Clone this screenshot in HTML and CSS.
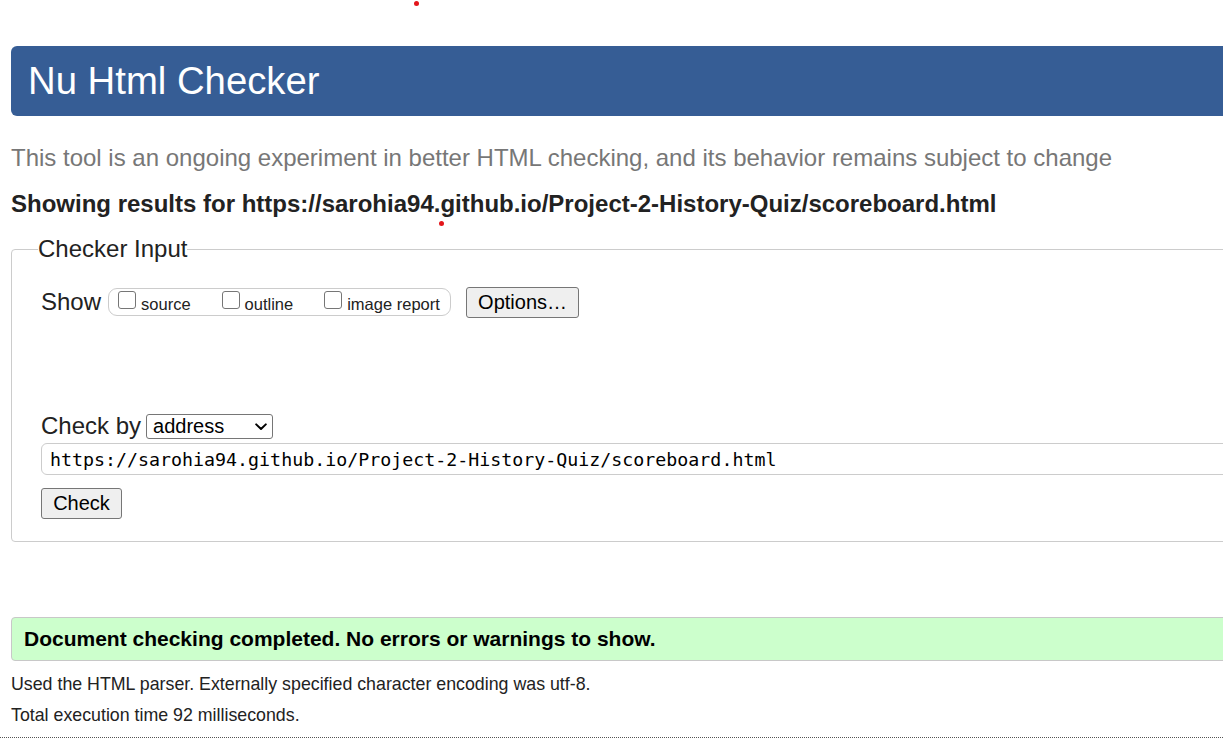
FILE: index.html
```html
<!DOCTYPE html>
<html lang="en">
<head>
<meta charset="utf-8">
<title>Showing results for https://sarohia94.github.io/Project-2-History-Quiz/scoreboard.html - Nu Html Checker</title>
<link rel="stylesheet" href="styles.css">
</head>
<body>
<div class="page">
  <h1 class="masthead">Nu Html Checker</h1>
  <p class="intro">This tool is an ongoing experiment in better HTML checking, and its behavior remains subject to change</p>
  <p class="result-for">Showing results for https://sarohia94.github.io/Project-2-History-Quiz/scoreboard.html</p>
  <form class="checker-form">
    <fieldset class="checker">
      <legend class="checker-legend">Checker Input</legend>
      <div class="show-row">
        <span class="row-label">Show</span>
        <span class="show-group">
          <label class="opt"><input type="checkbox" class="cb"><span>source</span></label>
          <label class="opt"><input type="checkbox" class="cb"><span>outline</span></label>
          <label class="opt"><input type="checkbox" class="cb"><span>image report</span></label>
        </span>
        <button type="button" class="btn btn-options">Options…</button>
      </div>
      <div class="checkby-row">
        <span class="row-label">Check by</span>
        <span class="select-wrap">
          <select class="select">
            <option>address</option>
            <option>file upload</option>
            <option>text input</option>
          </select>
          <svg class="chevron" width="12" height="8" viewBox="0 0 12 8" aria-hidden="true"><path d="M1.2 1.4 L6 6 L10.8 1.4" fill="none" stroke="#000" stroke-width="2" stroke-linecap="round" stroke-linejoin="round"/></svg>
        </span>
      </div>
      <input class="url" type="url" value="https://sarohia94.github.io/Project-2-History-Quiz/scoreboard.html">
      <button type="button" class="btn btn-check">Check</button>
    </fieldset>
  </form>
  <p class="success">Document checking completed. No errors or warnings to show.</p>
  <p class="details">Used the HTML parser. Externally specified character encoding was utf-8.</p>
  <p class="details details-time">Total execution time 92 milliseconds.</p>
  <hr class="rule">
</div>
<span class="dot dot-a"></span>
<span class="dot dot-b"></span>
</body>
</html>
```
FILE: styles.css
```css
html {
  overflow: hidden;
}
body {
  margin: 0;
  font-family: "Liberation Sans", Arial, sans-serif;
  color: #222;
  background: #fff;
}
.page {
  width: 1500px;
  padding-left: 11px;
  padding-top: 46px;
}
.masthead {
  margin: 0;
  height: 70px;
  line-height: 70px;
  padding-left: 17px;
  background: #365d95;
  color: #fff;
  font-size: 38.3px;
  font-weight: normal;
  border-radius: 6px 0 0 6px;
}
.intro {
  margin: 27px 0 0;
  line-height: 30px;
  font-size: 24px;
  color: #777;
}
.result-for {
  margin: 16px 0 0;
  line-height: 30px;
  font-size: 24px;
  font-weight: bold;
}
.checker-form {
  margin: 17px 0 0;
}
.checker {
  margin: 0;
  padding: 0 0 22px 26px;
  border: 1px solid #cccccc;
  border-radius: 4px;
  min-width: 0;
}
.checker-legend {
  padding: 0;
  font-size: 24px;
  line-height: 26px;
}
.row-label {
  font-size: 24px;
}
.show-row {
  display: flex;
  align-items: center;
  height: 32px;
  margin: 24px 0 0 3px;
}
.show-group {
  display: flex;
  align-items: center;
  box-sizing: border-box;
  height: 28px;
  width: 343px;
  margin-left: 7px;
  padding: 0 0 0 9px;
  border: 1px solid #cccccc;
  border-radius: 9px;
}
.opt {
  display: flex;
  align-items: flex-end;
  font-size: 16.5px;
  margin-right: 31px;
}
.opt:last-child {
  margin-right: 0;
}
.cb {
  appearance: none;
  -webkit-appearance: none;
  flex: none;
  box-sizing: border-box;
  width: 18px;
  height: 18px;
  margin: 0 5px 4px 0;
  border: 1px solid #767676;
  border-radius: 3px;
  background: #fff;
}
.opt span {
  line-height: 20px;
  position: relative;
  top: 1px;
}
.btn {
  box-sizing: border-box;
  font-family: "Liberation Sans", Arial, sans-serif;
  font-size: 20px;
  color: #000;
  background: #efefef;
  border: 1px solid #767676;
  border-radius: 3px;
  height: 31px;
  line-height: 27px;
}
.btn-options {
  margin-left: 15px;
  width: 113px;
  padding: 0;
}
.checkby-row {
  display: flex;
  align-items: center;
  height: 28px;
  margin: 94px 0 0 3px;
}
.select-wrap {
  position: relative;
  display: inline-block;
  margin-left: 5px;
  height: 25px;
}
.select {
  appearance: none;
  -webkit-appearance: none;
  box-sizing: border-box;
  width: 127px;
  height: 25px;
  font-family: "Liberation Sans", Arial, sans-serif;
  font-size: 20px;
  line-height: 23px;
  color: #000;
  padding: 0 0 0 6px;
  border: 1px solid #767676;
  border-radius: 3px;
  background: #fff;
}
.chevron {
  position: absolute;
  right: 6px;
  top: 9px;
  pointer-events: none;
}
.url {
  display: block;
  box-sizing: border-box;
  margin: 3px 0 0 3px;
  width: 1400px;
  height: 32px;
  padding: 0 0 0 8px;
  border: 1px solid #cccccc;
  border-radius: 6px;
  font-family: "DejaVu Sans Mono", "Liberation Mono", monospace;
  font-size: 18.3px;
  color: #000;
}
.btn-check {
  display: block;
  margin: 13px 0 0 3px;
  width: 81px;
  padding: 0;
}
.success {
  margin: 75px 0 0;
  height: 42px;
  line-height: 42px;
  padding-left: 12px;
  background: #ccffcc;
  border: 1px solid #c8c8c8;
  border-radius: 4px;
  font-weight: bold;
  font-size: 21px;
  color: #000;
}
.details {
  margin: 12px 0 0;
  line-height: 22px;
  font-size: 17.8px;
  color: #222;
}
.details-time {
  margin-top: 9px;
}
.rule {
  margin: 11px 0 0 -11px;
  border: 0;
  border-top: 1px dotted #555;
  height: 0;
}
.dot {
  position: absolute;
  width: 5px;
  height: 5px;
  border-radius: 50%;
  background: #e3161b;
}
.dot-a {
  left: 414px;
  top: 1px;
}
.dot-b {
  left: 439px;
  top: 221px;
}
```
